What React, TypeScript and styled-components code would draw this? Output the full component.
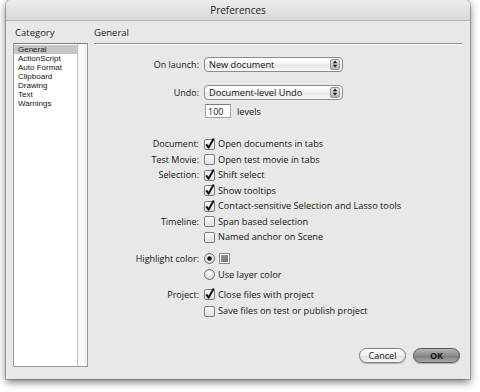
import React from "react";
import styled, { createGlobalStyle } from "styled-components";

const GlobalStyle = createGlobalStyle`
  html, body {
    margin: 0;
    padding: 0;
    background: #fff;
  }
  body {
    font-family: "Open Sans", "DejaVu Sans", sans-serif;
    color: #141414;
  }
`;

const Page = styled.div`
  width: 480px;
  height: 392px;
  padding-left: 6px;
  box-sizing: border-box;
`;

const Window = styled.div`
  width: 464px;
  height: 379px;
  display: flex;
  flex-direction: column;
  background: #e8e8e8;
  border-radius: 5px 5px 0 0;
  box-shadow: 0 3px 8px rgba(0, 0, 0, 0.55), 0 0 0 1px rgba(0, 0, 0, 0.22);
`;

const TitleBar = styled.div`
  height: 20px;
  flex: none;
  display: flex;
  align-items: center;
  justify-content: center;
  font-size: 10px;
  color: #222;
  border-radius: 5px 5px 0 0;
  background: linear-gradient(#ececec, #d9d9d9);
  border-bottom: 1px solid #b4b4b4;
`;

const Body = styled.div`
  flex: 1;
  display: flex;
  padding: 0 8px 12px 7px;
  min-height: 0;
`;

const Sidebar = styled.div`
  width: 75px;
  display: flex;
  flex-direction: column;
`;

const Heading = styled.div<{ $inset?: number }>`
  height: 22px;
  display: flex;
  align-items: center;
  padding-left: ${(p) => p.$inset ?? 0}px;
  font-size: 9.5px;
  color: #1a1a1a;
`;

const ListFrame = styled.div`
  flex: 1;
  display: flex;
  border: 1px solid #9a9a9a;
  border-top-color: #7c7c7c;
  background: #fff;
`;

const List = styled.div`
  flex: 1;
  padding-top: 1px;
`;

const ListItem = styled.div<{ $selected?: boolean }>`
  height: 9px;
  line-height: 9px;
  font-family: "Liberation Sans", Arial, sans-serif;
  font-size: 8px;
  padding-left: 4px;
  background: ${(p) => (p.$selected ? "#c6c6c6" : "transparent")};
`;

const ScrollTrack = styled.div`
  width: 9px;
  border-left: 1px solid #c4c4c4;
  background: linear-gradient(90deg, #f4f4f4, #fcfcfc 50%, #eeeeee);
`;

const Main = styled.div`
  flex: 1;
  display: flex;
  flex-direction: column;
  margin-left: 6px;
`;

const Divider = styled.div`
  height: 1px;
  background: #8e8e8e;
  box-shadow: 0 1px 0 #fafafa;
`;

const Form = styled.div`
  display: flex;
  flex-direction: column;
  padding-top: 12px;
`;

const Row = styled.div<{ $h?: number; $mt?: number }>`
  display: grid;
  grid-template-columns: 105px 1fr;
  column-gap: 5px;
  align-items: center;
  height: ${(p) => p.$h ?? 15.5}px;
  margin-top: ${(p) => p.$mt ?? 0}px;
`;

const Label = styled.div`
  text-align: right;
  font-size: 9px;
  white-space: nowrap;
`;

const Control = styled.div`
  display: flex;
  align-items: center;
  gap: 3px;
  font-size: 9.2px;
  white-space: nowrap;
`;

const Popup = styled.div`
  width: 139px;
  height: 15px;
  box-sizing: border-box;
  display: flex;
  align-items: center;
  padding: 0 2px 0 4px;
  border: 1px solid #8c8c8c;
  border-radius: 4px;
  background: linear-gradient(#ffffff, #f4f4f4 45%, #e6e6e6 55%, #f8f8f8);
  font-size: 9.2px;
`;

const PopupArrows = styled.span`
  margin-left: auto;
  width: 10px;
  height: 11px;
  display: flex;
  align-items: center;
  justify-content: center;
  border-radius: 2px;
  background: linear-gradient(#e2e2e2, #b6b6b6);
  border: 1px solid #9a9a9a;
  box-sizing: border-box;
`;

const TextField = styled.div`
  width: 26px;
  height: 14px;
  box-sizing: border-box;
  margin-left: 1px;
  padding-left: 2px;
  display: flex;
  align-items: center;
  background: #fff;
  border: 1px solid #a4a4a4;
  border-top-color: #7e7e7e;
  font-size: 9px;
`;

const Suffix = styled.span`
  margin-left: 3px;
`;

const Footer = styled.div`
  margin-top: auto;
  display: flex;
  justify-content: flex-end;
  gap: 7px;
  padding-right: 2px;
  margin-bottom: 4px;
`;

const PillButton = styled.div<{ $default?: boolean }>`
  width: 47px;
  height: 15px;
  box-sizing: border-box;
  display: flex;
  align-items: center;
  justify-content: center;
  border-radius: 8px;
  font-size: 9px;
  font-weight: ${(p) => (p.$default ? 700 : 400)};
  border: 1px solid ${(p) => (p.$default ? "#555" : "#7e7e7e")};
  background: ${(p) =>
    p.$default
      ? "linear-gradient(#b4b4b4, #8c8c8c 50%, #7c7c7c 52%, #a8a8a8)"
      : "linear-gradient(#ffffff, #f0f0f0 50%, #e0e0e0 52%, #f6f6f6)"};
  box-shadow: 0 1px 1px rgba(0, 0, 0, 0.25);
`;

const Swatch = styled.span`
  width: 11px;
  height: 11px;
  box-sizing: border-box;
  border: 1px solid #8a8a8a;
  background: #fff;
  padding: 1px;
  display: flex;
  margin-left: 1px;
`;

const SwatchFill = styled.span`
  flex: 1;
  background: linear-gradient(135deg, #9c9c9c, #6e6e6e);
`;

const Arrows = () => (
  <svg width="6" height="8" viewBox="0 0 6 8">
    <path d="M3 0.5 L5.3 3.2 H0.7 Z" fill="#222" />
    <path d="M3 7.5 L5.3 4.8 H0.7 Z" fill="#222" />
  </svg>
);

const Check = ({ checked }: { checked?: boolean }) => (
  <svg width="11" height="12" viewBox="0 0 11 12" style={{ flex: "none" }}>
    <defs>
      <linearGradient id="cb" x1="0" y1="0" x2="0" y2="1">
        <stop offset="0" stopColor="#fdfdfd" />
        <stop offset="1" stopColor="#dedede" />
      </linearGradient>
    </defs>
    <rect x="0.5" y="1.5" width="10" height="10" rx="1.5" fill="url(#cb)" stroke="#7c7c7c" />
    {checked && (
      <path d="M2.2 6.4 L4.6 9.6 L9.8 0.6" fill="none" stroke="#151515" strokeWidth="2" strokeLinejoin="round" />
    )}
  </svg>
);

const Radio = ({ on }: { on?: boolean }) => (
  <svg width="11" height="11" viewBox="0 0 11 11" style={{ flex: "none" }}>
    <defs>
      <radialGradient id="rb" cx="0.5" cy="0.35" r="0.6">
        <stop offset="0" stopColor="#ffffff" />
        <stop offset="1" stopColor="#d6d6d6" />
      </radialGradient>
    </defs>
    <circle cx="5.5" cy="5.5" r="5" fill="url(#rb)" stroke="#6e6e6e" />
    {on && <circle cx="5.5" cy="5.5" r="2.3" fill="#111" />}
  </svg>
);

const categories = ["General", "ActionScript", "Auto Format", "Clipboard", "Drawing", "Text", "Warnings"];

const App: React.FC = () => (
  <>
    <GlobalStyle />
    <Page>
      <Window>
        <TitleBar>Preferences</TitleBar>
        <Body>
          <Sidebar>
            <Heading $inset={2}>Category</Heading>
            <ListFrame>
              <List>
                {categories.map((c, i) => (
                  <ListItem key={c} $selected={i === 0}>
                    {c}
                  </ListItem>
                ))}
              </List>
              <ScrollTrack />
            </ListFrame>
          </Sidebar>
          <Main>
            <Heading>General</Heading>
            <Divider />
            <Form>
              <Row $h={16}>
                <Label>On launch:</Label>
                <Control>
                  <Popup>
                    New document
                    <PopupArrows>
                      <Arrows />
                    </PopupArrows>
                  </Popup>
                </Control>
              </Row>
              <Row $h={16} $mt={12}>
                <Label>Undo:</Label>
                <Control>
                  <Popup>
                    Document-level Undo
                    <PopupArrows>
                      <Arrows />
                    </PopupArrows>
                  </Popup>
                </Control>
              </Row>
              <Row $h={16} $mt={3}>
                <Label />
                <Control>
                  <TextField>100</TextField>
                  <Suffix>levels</Suffix>
                </Control>
              </Row>
              <Row $mt={17}>
                <Label>Document:</Label>
                <Control>
                  <Check checked />
                  Open documents in tabs
                </Control>
              </Row>
              <Row>
                <Label>Test Movie:</Label>
                <Control>
                  <Check />
                  Open test movie in tabs
                </Control>
              </Row>
              <Row>
                <Label>Selection:</Label>
                <Control>
                  <Check checked />
                  Shift select
                </Control>
              </Row>
              <Row>
                <Label />
                <Control>
                  <Check checked />
                  Show tooltips
                </Control>
              </Row>
              <Row>
                <Label />
                <Control>
                  <Check checked />
                  Contact-sensitive Selection and Lasso tools
                </Control>
              </Row>
              <Row>
                <Label>Timeline:</Label>
                <Control>
                  <Check />
                  Span based selection
                </Control>
              </Row>
              <Row>
                <Label />
                <Control>
                  <Check />
                  Named anchor on Scene
                </Control>
              </Row>
              <Row $h={16} $mt={6}>
                <Label>Highlight color:</Label>
                <Control>
                  <Radio on />
                  <Swatch>
                    <SwatchFill />
                  </Swatch>
                </Control>
              </Row>
              <Row $h={16}>
                <Label />
                <Control>
                  <Radio />
                  Use layer color
                </Control>
              </Row>
              <Row $h={17} $mt={3}>
                <Label>Project:</Label>
                <Control>
                  <Check checked />
                  Close files with project
                </Control>
              </Row>
              <Row $h={16}>
                <Label />
                <Control>
                  <Check />
                  Save files on test or publish project
                </Control>
              </Row>
            </Form>
            <Footer>
              <PillButton>Cancel</PillButton>
              <PillButton $default>OK</PillButton>
            </Footer>
          </Main>
        </Body>
      </Window>
    </Page>
  </>
);

export default App;
